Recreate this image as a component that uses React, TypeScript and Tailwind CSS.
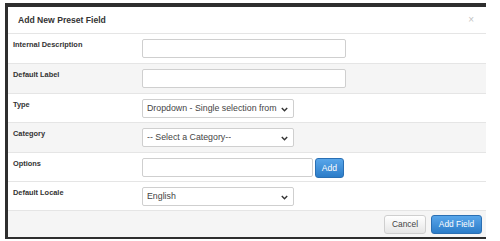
import React from "react";

const font = { fontFamily: '"Liberation Sans", Arial, sans-serif' };

function Chevron() {
  return (
    <svg width="7" height="5" viewBox="0 0 7 5" className="absolute right-[5px] top-[7px]">
      <path d="M0.8 1 L3.5 3.8 L6.2 1" fill="none" stroke="#333" strokeWidth="1.4" />
    </svg>
  );
}

function TextInput({ w }: { w: string }) {
  return <div className={`${w} h-[19px] bg-white border border-[#cfcfcf] rounded-[2px]`} />;
}

function Select({ text }: { text: string }) {
  return (
    <div className="relative w-[152px] h-[19px] bg-white border border-[#cfcfcf] rounded-[2px] flex items-center pl-[4px] pr-[14px] text-[8.8px] text-[#444] whitespace-nowrap">
      <span className="overflow-hidden">{text}</span>
      <Chevron />
    </div>
  );
}

function Row({ label, gray, h, children }: { label: string; gray?: boolean; h: string; children: React.ReactNode }) {
  return (
    <div className={`${h} flex items-start pt-[5px] border-b border-[#e5e5e5] ${gray ? "bg-[#f5f5f5]" : "bg-white"}`}>
      <div className="w-[134px] pl-[5px] pt-[1px] text-[7.4px] leading-[9px] font-bold text-[#333]">{label}</div>
      {children}
    </div>
  );
}

export default function App() {
  return (
    <div className="w-[500px] h-[241px] bg-white pl-[5px] pt-[3px]" style={font}>
      <div className="w-[481px] border-l-[3px] border-t-[4px] border-b-[2px] border-[#2e2e2e] bg-white">
        <div className="h-[27px] flex items-center justify-between pl-[10px] pr-[12px] border-b border-[#e5e5e5]">
          <span className="text-[8.6px] font-bold text-[#333]">Add New Preset Field</span>
          <span className="text-[10px] text-[#c4c4c4] leading-none">×</span>
        </div>
        <Row label="Internal Description" h="h-[30px]">
          <TextInput w="w-[204px]" />
        </Row>
        <Row label="Default Label" gray h="h-[30px]">
          <TextInput w="w-[204px]" />
        </Row>
        <Row label="Type" h="h-[29px]">
          <Select text="Dropdown - Single selection from" />
        </Row>
        <Row label="Category" gray h="h-[30px]">
          <Select text="-- Select a Category--" />
        </Row>
        <Row label="Options" h="h-[29px]">
          <div className="flex items-start gap-[2px]">
            <TextInput w="w-[171px]" />
            <button className="w-[29px] h-[20px] rounded-[3px] border border-[#2a6fb3] bg-gradient-to-b from-[#58a6ea] to-[#2b7cc8] text-white text-[8.6px] leading-none flex items-center justify-center">
              Add
            </button>
          </div>
        </Row>
        <Row label="Default Locale" h="h-[29px]">
          <Select text="English" />
        </Row>
        <div className="h-[26px] bg-[#f5f5f5] flex items-start justify-end pt-[4px] pr-[4px] gap-[5px]">
          <button className="w-[42px] h-[19px] rounded-[3px] border border-[#cfcfcf] bg-gradient-to-b from-white to-[#e6e6e6] text-[#444] text-[8.4px] leading-none flex items-center justify-center">
            Cancel
          </button>
          <button className="w-[51px] h-[19px] rounded-[3px] border border-[#2a6fb3] bg-gradient-to-b from-[#58a6ea] to-[#2b7cc8] text-white text-[8.4px] leading-none flex items-center justify-center">
            Add Field
          </button>
        </div>
      </div>
    </div>
  );
}
